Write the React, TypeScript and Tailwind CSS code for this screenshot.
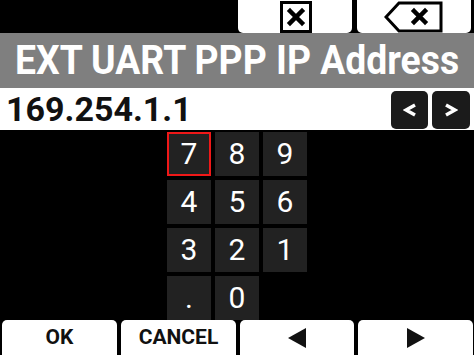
const KEYS = ["7", "8", "9", "4", "5", "6", "3", "2", "1", ".", "0"];

function ClearIcon() {
  return (
    <svg width="32" height="32" viewBox="0 0 32 32">
      <rect x="1.5" y="1.5" width="29" height="29" fill="white" stroke="black" strokeWidth="3" />
      <path d="M10 10 L22 22 M22 10 L10 22" stroke="black" strokeWidth="4.5" strokeLinecap="square" />
    </svg>
  );
}

function BackspaceIcon() {
  return (
    <svg width="60" height="32" viewBox="0 0 60 32">
      <path d="M15 2 H57 V30 H15 L2 16 Z" fill="white" stroke="black" strokeWidth="3" strokeLinejoin="miter" />
      <path d="M30 10 L41 21 M41 10 L30 21" stroke="black" strokeWidth="4.5" strokeLinecap="square" />
    </svg>
  );
}

export default function App() {
  return (
    <div
      className="w-[474px] h-[355px] bg-black overflow-hidden flex flex-col"
      style={{ fontFamily: "Roboto, 'Liberation Sans', sans-serif" }}
    >
      <div className="h-[33px] flex pl-[238px] gap-[5px]">
        <button className="w-[114px] h-[33px] bg-white rounded-b-[5px] flex items-start justify-center pl-[2px] pt-[1px]">
          <ClearIcon />
        </button>
        <button className="w-[114px] h-[33px] bg-white rounded-b-[5px] flex items-start justify-center pt-[1px]">
          <BackspaceIcon />
        </button>
      </div>

      <div className="h-[55px] bg-[#7f7f7f] flex items-center pl-[15px] overflow-hidden">
        <span className="text-white font-bold text-[41px] leading-none whitespace-nowrap origin-left scale-x-[0.91]">
          EXT UART PPP IP Address
        </span>
      </div>

      <div className="h-[42px] bg-white flex items-center">
        <span className="pl-[6px] text-[34px] font-bold leading-none text-[#111] flex-1">169.254.1.1</span>
        <div className="flex gap-[4px] pr-[4px] self-end pb-[1px]">
          <button className="w-[37px] h-[38px] rounded-[5px] bg-[#1b1b1b] flex items-center justify-center">
            <svg width="14" height="14" viewBox="0 0 14 14">
              <path d="M12 2 L3 7 L12 12" fill="none" stroke="white" strokeWidth="3.5" />
            </svg>
          </button>
          <button className="w-[38px] h-[38px] rounded-[5px] bg-[#1b1b1b] flex items-center justify-center">
            <svg width="14" height="14" viewBox="0 0 14 14">
              <path d="M2 2 L11 7 L2 12" fill="none" stroke="white" strokeWidth="3.5" />
            </svg>
          </button>
        </div>
      </div>

      <div className="h-[190px] pt-[2px] pl-[167px]">
        <div className="grid grid-cols-[44px_44px_44px] auto-rows-[44px] gap-[4px]">
          {KEYS.map((k, i) => (
            <div
              key={k}
              className={`bg-[#222222] text-white text-[30px] leading-none flex items-center justify-center ${
                i === 0 ? "border-2 border-[#f01818]" : ""
              }`}
            >
              {k}
            </div>
          ))}
        </div>
      </div>

      <div className="h-[35px] flex gap-[4px] pl-[2px]">
        <button className="w-[115px] bg-white rounded-t-[5px] font-bold text-[21px] text-[#111] flex items-center justify-center">
          OK
        </button>
        <button className="w-[115px] bg-white rounded-t-[5px] font-bold text-[21px] text-[#111] flex items-center justify-center">
          CANCEL
        </button>
        <button className="w-[114px] bg-white rounded-t-[5px] flex items-center justify-center">
          <svg width="18" height="20" viewBox="0 0 18 20">
            <path d="M18 0 V20 L0 10 Z" fill="#111" />
          </svg>
        </button>
        <button className="w-[115px] bg-white rounded-t-[5px] flex items-center justify-center">
          <svg width="18" height="20" viewBox="0 0 18 20">
            <path d="M0 0 V20 L18 10 Z" fill="#111" />
          </svg>
        </button>
      </div>
    </div>
  );
}
